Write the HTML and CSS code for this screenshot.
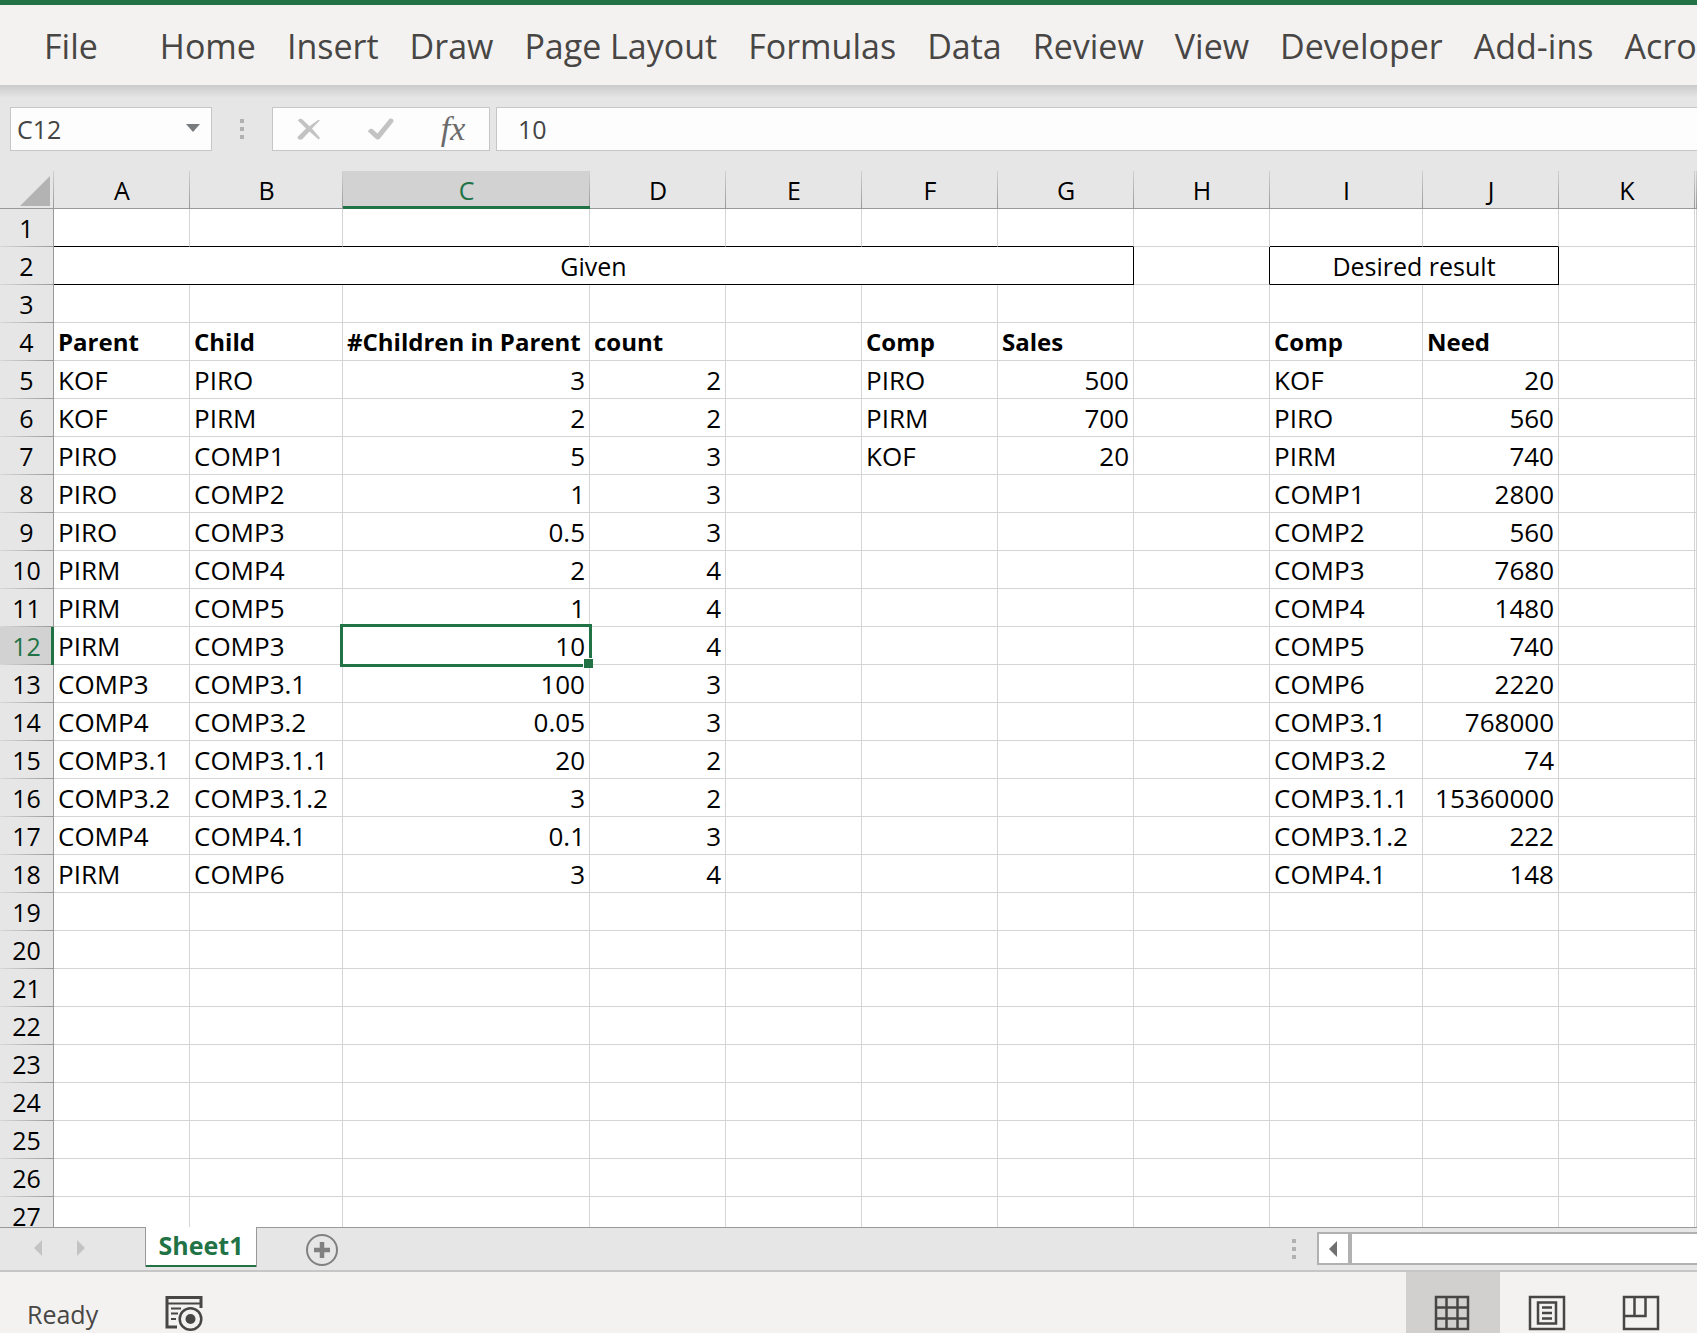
FILE: index.html
```html
<!DOCTYPE html>
<html lang="en">
<head>
<meta charset="utf-8">
<title>Sheet1</title>
<link rel="stylesheet" href="styles.css">
</head>
<body>
<nav class="ribbon" aria-label="Ribbon tabs">
  <button class="tab file">File</button>
  <button class="tab">Home</button>
  <button class="tab">Insert</button>
  <button class="tab">Draw</button>
  <button class="tab">Page Layout</button>
  <button class="tab">Formulas</button>
  <button class="tab">Data</button>
  <button class="tab">Review</button>
  <button class="tab">View</button>
  <button class="tab">Developer</button>
  <button class="tab">Add-ins</button>
  <button class="tab">Acrobat</button>
</nav>

<div class="formula-bar">
  <div class="name-box">
    <input class="name-input" aria-label="Name box" value="C12">
    <button class="name-drop" aria-label="Show names"><svg width="14" height="8" viewBox="0 0 14 8"><path d="M0 0h14L7 8z" fill="#777b7e"/></svg></button>
  </div>
  <span class="grip"><i></i><i></i><i></i></span>
  <div class="fx-buttons">
    <button aria-label="Cancel"><svg width="24" height="22" viewBox="0 0 24 22"><path d="M1 2.500C2 .3 4.500.2 6 2l6.500 6.300L21 2l2 .3-8 8.200 8 9.500-1.500 1.500-9-8-7 7.500C3.500 22.500.300 21.500.500 19L9 10.500z" fill="#c3c3c3"/></svg></button>
    <button aria-label="Enter"><svg width="26" height="22" viewBox="0 0 26 22"><path d="M0 13.500C1 10.500 4 10 5.500 12l4 3.500L21.500.800C23.500-.3 26 .8 25.500 3.500L12 20.500c-1.500 1.500-3 1.500-4.500 0z" fill="#c3c3c3"/></svg></button>
    <button class="fx" aria-label="Insert function">fx</button>
  </div>
  <input class="formula-input" aria-label="Formula" value="10">
</div>

<main class="sheet">
<table class="grid">
<colgroup><col class="c-head"><col class="c-std"><col class="c-mid"><col class="c-wide"><col class="c-std"><col class="c-std"><col class="c-std"><col class="c-std"><col class="c-std"><col class="c-mid"><col class="c-std"><col class="c-std"><col></colgroup>
<thead>
<tr><th class="corner"><svg width="30" height="30" viewBox="0 0 30 30"><path d="M30 0v30H0z" fill="#b3b3b3"/></svg></th><th>A</th><th>B</th><th class="sel">C</th><th>D</th><th>E</th><th>F</th><th>G</th><th>H</th><th>I</th><th>J</th><th>K</th><th></th></tr>
</thead>
<tbody>
<tr class="over"><th>1</th><td></td><td></td><td></td><td></td><td></td><td></td><td></td><td class="plain"></td><td></td><td></td><td class="plain"></td><td class="plain"></td></tr>
<tr><th>2</th><td class="merged" colspan="7">Given</td><td class="edge"></td><td class="merged" colspan="2">Desired result</td><td></td><td></td></tr>
<tr><th>3</th><td></td><td></td><td></td><td></td><td></td><td></td><td></td><td></td><td></td><td></td><td></td><td></td></tr>
<tr class="bold"><th>4</th><td>Parent</td><td>Child</td><td>#Children in Parent</td><td>count</td><td></td><td>Comp</td><td>Sales</td><td></td><td>Comp</td><td>Need</td><td></td><td></td></tr>
<tr><th>5</th><td>KOF</td><td>PIRO</td><td class="n">3</td><td class="n">2</td><td></td><td>PIRO</td><td class="n">500</td><td></td><td>KOF</td><td class="n">20</td><td></td><td></td></tr>
<tr><th>6</th><td>KOF</td><td>PIRM</td><td class="n">2</td><td class="n">2</td><td></td><td>PIRM</td><td class="n">700</td><td></td><td>PIRO</td><td class="n">560</td><td></td><td></td></tr>
<tr><th>7</th><td>PIRO</td><td>COMP1</td><td class="n">5</td><td class="n">3</td><td></td><td>KOF</td><td class="n">20</td><td></td><td>PIRM</td><td class="n">740</td><td></td><td></td></tr>
<tr><th>8</th><td>PIRO</td><td>COMP2</td><td class="n">1</td><td class="n">3</td><td></td><td></td><td></td><td></td><td>COMP1</td><td class="n">2800</td><td></td><td></td></tr>
<tr><th>9</th><td>PIRO</td><td>COMP3</td><td class="n">0.5</td><td class="n">3</td><td></td><td></td><td></td><td></td><td>COMP2</td><td class="n">560</td><td></td><td></td></tr>
<tr><th>10</th><td>PIRM</td><td>COMP4</td><td class="n">2</td><td class="n">4</td><td></td><td></td><td></td><td></td><td>COMP3</td><td class="n">7680</td><td></td><td></td></tr>
<tr><th>11</th><td>PIRM</td><td>COMP5</td><td class="n">1</td><td class="n">4</td><td></td><td></td><td></td><td></td><td>COMP4</td><td class="n">1480</td><td></td><td></td></tr>
<tr><th class="sel">12</th><td>PIRM</td><td>COMP3</td><td class="n active">10</td><td class="n">4</td><td></td><td></td><td></td><td></td><td>COMP5</td><td class="n">740</td><td></td><td></td></tr>
<tr><th>13</th><td>COMP3</td><td>COMP3.1</td><td class="n">100</td><td class="n">3</td><td></td><td></td><td></td><td></td><td>COMP6</td><td class="n">2220</td><td></td><td></td></tr>
<tr><th>14</th><td>COMP4</td><td>COMP3.2</td><td class="n">0.05</td><td class="n">3</td><td></td><td></td><td></td><td></td><td>COMP3.1</td><td class="n">768000</td><td></td><td></td></tr>
<tr><th>15</th><td>COMP3.1</td><td>COMP3.1.1</td><td class="n">20</td><td class="n">2</td><td></td><td></td><td></td><td></td><td>COMP3.2</td><td class="n">74</td><td></td><td></td></tr>
<tr><th>16</th><td>COMP3.2</td><td>COMP3.1.2</td><td class="n">3</td><td class="n">2</td><td></td><td></td><td></td><td></td><td>COMP3.1.1</td><td class="n">15360000</td><td></td><td></td></tr>
<tr><th>17</th><td>COMP4</td><td>COMP4.1</td><td class="n">0.1</td><td class="n">3</td><td></td><td></td><td></td><td></td><td>COMP3.1.2</td><td class="n">222</td><td></td><td></td></tr>
<tr><th>18</th><td>PIRM</td><td>COMP6</td><td class="n">3</td><td class="n">4</td><td></td><td></td><td></td><td></td><td>COMP4.1</td><td class="n">148</td><td></td><td></td></tr>
<tr><th>19</th><td></td><td></td><td></td><td></td><td></td><td></td><td></td><td></td><td></td><td></td><td></td><td></td></tr>
<tr><th>20</th><td></td><td></td><td></td><td></td><td></td><td></td><td></td><td></td><td></td><td></td><td></td><td></td></tr>
<tr><th>21</th><td></td><td></td><td></td><td></td><td></td><td></td><td></td><td></td><td></td><td></td><td></td><td></td></tr>
<tr><th>22</th><td></td><td></td><td></td><td></td><td></td><td></td><td></td><td></td><td></td><td></td><td></td><td></td></tr>
<tr><th>23</th><td></td><td></td><td></td><td></td><td></td><td></td><td></td><td></td><td></td><td></td><td></td><td></td></tr>
<tr><th>24</th><td></td><td></td><td></td><td></td><td></td><td></td><td></td><td></td><td></td><td></td><td></td><td></td></tr>
<tr><th>25</th><td></td><td></td><td></td><td></td><td></td><td></td><td></td><td></td><td></td><td></td><td></td><td></td></tr>
<tr><th>26</th><td></td><td></td><td></td><td></td><td></td><td></td><td></td><td></td><td></td><td></td><td></td><td></td></tr>
<tr><th>27</th><td></td><td></td><td></td><td></td><td></td><td></td><td></td><td></td><td></td><td></td><td></td><td></td></tr>
</tbody>
</table>
</main>

<div class="sheet-bar">
  <div class="sheet-nav">
    <button aria-label="Previous sheet"><svg width="8" height="16" viewBox="0 0 8 16"><path d="M8 0v16L0 8z" fill="#c3c3c3"/></svg></button>
    <button aria-label="Next sheet"><svg width="8" height="16" viewBox="0 0 8 16"><path d="M0 0v16l8-8z" fill="#c3c3c3"/></svg></button>
  </div>
  <button class="sheet-tab">Sheet1</button>
  <button class="add-sheet" aria-label="New sheet"><svg width="32" height="32" viewBox="0 0 32 32"><circle cx="16" cy="16" r="15" fill="none" stroke="#808080" stroke-width="2"/><path d="M16 8v16M8 16h16" stroke="#808080" stroke-width="4.500"/></svg></button>
  <span class="grip"><i></i><i></i><i></i></span>
  <div class="scroll">
    <button class="scroll-left" aria-label="Scroll left"><svg width="8" height="16" viewBox="0 0 8 16"><path d="M8 0v16L0 8z" fill="#707070"/></svg></button>
    <div class="thumb"></div>
  </div>
</div>

<footer class="status">
  <span class="ready">Ready</span>
  <button class="macro" aria-label="Record macro"><svg width="38" height="36" viewBox="0 0 38 36" fill="none" stroke="#484644"><path d="M12 31H2V1.500h34V12" stroke-width="3"/><path d="M2 7.500h34" stroke-width="2"/><path d="M6 12.500h10M6 17.500h7M6 23h5" stroke-width="2"/><circle cx="25.500" cy="23" r="10.800" stroke-width="2.500"/><circle cx="25.500" cy="23" r="5" fill="#484644" stroke="none"/></svg></button>
  <div class="views">
    <button class="on" aria-label="Normal view"><svg width="38" height="36" viewBox="0 0 38 36" fill="none" stroke="#484644" stroke-width="2.500"><path d="M2 2h32v32H2zM2 12.500h32M2 23.500h32M12.500 2v32M23.500 2v32"/></svg></button>
    <button aria-label="Page layout view"><svg width="38" height="36" viewBox="0 0 38 36" fill="none" stroke="#484644" stroke-width="2.500"><path d="M2 2h34v32H2zM10 7.500h18v21H10zM14 12.500h10M14 18h10M14 23.500h10"/></svg></button>
    <button aria-label="Page break preview"><svg width="38" height="36" viewBox="0 0 38 36" fill="none" stroke="#484644" stroke-width="2.500"><path d="M2 2h34v32H2zM2 21h21.500V2M12.500 2v19"/></svg></button>
  </div>
</footer>
</body>
</html>
```
FILE: styles.css
```css
* { box-sizing: border-box; }

body {
  margin: 0;
  height: 100vh;
  display: flex;
  flex-direction: column;
  overflow: hidden;
  background: #e6e6e6;
  color: #000;
  font-family: "Open Sans", "Noto Sans", sans-serif;
  font-size: 25px;
}

button, input {
  font: inherit;
  color: inherit;
  border: 0;
  padding: 0;
  margin: 0;
  background: none;
  border-radius: 0;
  min-width: 0;
}

svg { display: block; }

/* Ribbon */
.ribbon {
  flex: none;
  display: flex;
  align-items: center;
  gap: 31px;
  height: 85px;
  padding: 2px 0 0 44px;
  border-top: 5px solid #217346;
  background: #f3f2f1;
  color: #484644;
  font-size: 34px;
  overflow: hidden;
}
.tab { flex: none; white-space: nowrap; }
.file { margin-right: 31px; }

/* Formula bar */
.formula-bar {
  flex: none;
  display: flex;
  height: 86px;
  padding: 22px 0 20px 10px;
  background: linear-gradient(#cbcbcb, #e6e6e6 13px);
  color: #444;
}
.name-box, .fx-buttons, .formula-input {
  background: #fdfdfd;
  border: 1px solid #c6c6c6;
}
.name-box { display: flex; width: 202px; }
.name-input { flex: 1; padding-left: 6px; }
.name-drop { width: 36px; display: grid; place-items: center; padding-bottom: 2px; }
.grip {
  display: flex;
  flex-direction: column;
  justify-content: center;
  gap: 4px;
}
.grip i { width: 4px; height: 4px; background: #b1b1b1; }
.formula-bar .grip { margin: 0 28px; }
.fx-buttons { display: flex; width: 218px; margin-right: 6px; }
.fx-buttons button { flex: 1; display: grid; place-items: center; }
.fx-buttons .fx {
  font: italic 34px/40px "Liberation Serif", serif;
  color: #6b6b6b;
}
.formula-input { flex: 1; border-right: 0; padding-left: 21px; }

/* Grid */
.sheet { flex: 1; min-height: 0; overflow: hidden; background: #fff; }
.grid {
  width: 100%;
  table-layout: fixed;
  border-collapse: separate;
  border-spacing: 0;
}
.c-head { width: 54px; }
.c-std { width: 136px; }
.c-mid { width: 153px; }
.c-wide { width: 247px; }
.grid th, .grid td {
  height: 38px;
  padding: 0 4px;
  line-height: 36px;
  white-space: nowrap;
}
.grid td {
  border-right: 1px solid #d4d4d4;
  border-bottom: 1px solid #d4d4d4;
  text-align: left;
  font-size: 26px;
}
.grid th {
  font-weight: 400;
  text-align: center;
  background-color: #e6e6e6;
}
.grid thead th {
  padding-top: 2px;
  line-height: 35px;
  border-bottom: 1px solid #999;
  background-image: linear-gradient(#d0d0d0, #999);
  background-size: 1px 100%;
  background-position: right;
  background-repeat: no-repeat;
}
.grid tbody th {
  padding: 0;
  border-right: 1px solid #999;
  background-image: linear-gradient(to right, #d8d8d8, #999);
  background-size: 100% 1px;
  background-position: bottom;
  background-repeat: no-repeat;
}
.grid .sel { background-color: #d2d2d2; color: #217346; }
.grid thead .sel { border-bottom: 3px solid #217346; padding-top: 4px; line-height: 31px; }
.grid tbody .sel { border-right: 3px solid #217346; padding-left: 2px; }
.grid .corner { padding: 2px 4px 0 20px; }
.grid .n { text-align: right; }
.grid .bold td { font-weight: 700; font-size: 24px; }
.grid .over td { border-bottom-color: #000; }
.grid .over .plain { border-bottom-color: #d4d4d4; }
.grid .merged { text-align: center; border-color: #000; font-size: 25px; }
.grid .edge { border-right-color: #000; }

.active { position: relative; }
.active::before {
  content: "";
  position: absolute;
  inset: -3px;
  border: 3px solid #217346;
}
.active::after {
  content: "";
  position: absolute;
  right: -4px;
  bottom: -4px;
  width: 9px;
  height: 9px;
  background: #217346;
  border: solid #fff;
  border-width: 1px 0 0 1px;
}

/* Sheet tabs */
.sheet-bar {
  flex: none;
  display: flex;
  height: 43px;
  box-shadow: inset 0 1px #999;
}
.sheet-nav { display: flex; width: 145px; padding: 0 60px 2px 34px; justify-content: space-between; align-items: center; }
.sheet-tab {
  width: 112px;
  height: 40px;
  padding-bottom: 4px;
  background: #fff;
  border: solid #999;
  border-width: 0 1px;
  box-shadow: inset 0 -2px #217346;
  color: #217346;
  font-weight: 700;
  line-height: 36px;
}
.add-sheet { margin: 7px auto 4px 49px; }
.sheet-bar .grip { margin: 0 21px 0 0; }
.scroll {
  display: flex;
  gap: 2px;
  width: 380px;
  height: 33px;
  margin-top: 5px;
  background: #b1b1b1;
}
.scroll-left { width: 33px; padding-right: 2px; border: 2px solid #b1b1b1; background: #fff; display: grid; place-items: center; }
.thumb { flex: 1; border: solid #b1b1b1; border-width: 2px 0; background: #fff; }

/* Status bar */
.status {
  flex: none;
  display: flex;
  height: 63px;
  border-top: 2px solid #c6c6c6;
  padding: 0 9px 0 27px;
  background: #f3f2f1;
  color: #484644;
}
.ready { width: 138px; padding-top: 25px; line-height: 34px; }
.macro { padding-top: 23px; }
.views { display: flex; margin-left: auto; }
.views button { width: 94px; padding-top: 20px; display: grid; place-items: center; }
.views .on { background: #d2d0ce; }
```
